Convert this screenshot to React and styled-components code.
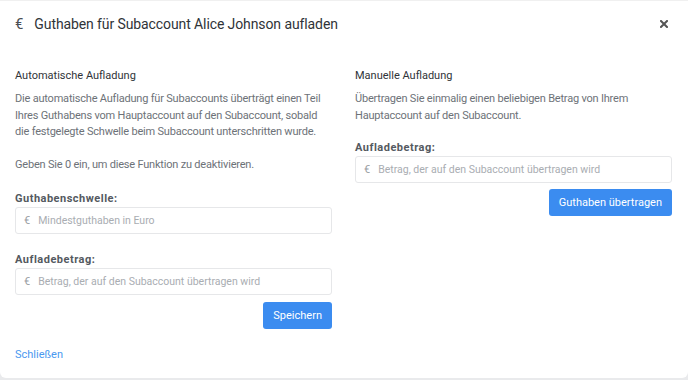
import React from 'react'
import styled, { createGlobalStyle } from 'styled-components'

const GlobalStyle = createGlobalStyle`
  html, body {
    margin: 0;
    padding: 0;
    background: #e9eaec;
  }
  body {
    font-family: Roboto, "Liberation Sans", Arial, sans-serif;
    -webkit-font-smoothing: antialiased;
  }
`

const Modal = styled.div`
  width: 688px;
  height: 378px;
  background: #fff;
  border-radius: 0 0 6px 6px;
  border-top: 1px solid #f0f0f0;
  box-sizing: border-box;
  display: flex;
  flex-direction: column;
`

const Header = styled.div`
  height: 46px;
  padding: 0 16px 0 15px;
  display: flex;
  align-items: center;
  justify-content: space-between;
`

const Title = styled.h2`
  margin: 0;
  font-size: 14px;
  letter-spacing: -0.1px;
  font-weight: 400;
  color: #2f3338;
  display: flex;
  align-items: center;
  gap: 11px;
`

const Euro = styled.span`
  font-size: ${p => p.size || 15}px;
  color: ${p => p.color || '#4a4e54'};
`

const Close = styled.button`
  border: 0;
  background: transparent;
  padding: 0;
  margin-right: 4px;
  cursor: pointer;
  display: flex;
  svg { display: block; }
`

const Body = styled.div`
  flex: 1;
  padding: 20px 16px 0 15px;
  display: grid;
  grid-template-columns: 1fr 1fr;
  column-gap: 23px;
`

const Column = styled.div`
  display: flex;
  flex-direction: column;
`

const SectionTitle = styled.h3`
  margin: 0 0 7px;
  font-size: 11px;
  font-weight: 400;
  color: #2f3338;
  line-height: 17px;
`

const Text = styled.p`
  margin: 0 0 ${p => p.mb || 0}px;
  font-size: 11px;
  letter-spacing: -0.2px;
  line-height: 16.5px;
  color: #6d7278;
`

const Label = styled.label`
  display: block;
  font-size: 11px;
  font-weight: 700;
  letter-spacing: 0.5px;
  color: #545960;
  line-height: 14px;
  margin-bottom: 1px;
`

const Field = styled.div`
  margin-bottom: ${p => p.mb || 0}px;
`

const InputWrap = styled.div`
  height: 27px;
  border: 1px solid #e6e7e9;
  border-radius: 3px;
  box-sizing: border-box;
  display: flex;
  align-items: center;
  padding-left: 8px;
  gap: 8px;
`

const Input = styled.input`
  flex: 1;
  border: 0;
  outline: 0;
  font: inherit;
  font-size: 10.5px;
  color: #333;
  background: transparent;
  padding: 0;
  &::placeholder {
    color: #a9adb2;
  }
`

const Actions = styled.div`
  display: flex;
  justify-content: flex-end;
  margin-top: ${p => p.mt || 7}px;
`

const Button = styled.button`
  height: 27px;
  padding: 0 10px;
  border: 0;
  border-radius: 3px;
  background: #3b8cf0;
  color: #fff;
  font: inherit;
  font-size: 11px;
  cursor: pointer;
`

const Footer = styled.div`
  padding: 0 15px 15px;
  line-height: 16px;
`

const Link = styled.a`
  font-size: 11px;
  color: #4a98ef;
  text-decoration: none;
  cursor: pointer;
`

const MoneyInput = ({ placeholder }) => (
  <InputWrap>
    <Euro size={11} color="#9a9ea4">€</Euro>
    <Input placeholder={placeholder} />
  </InputWrap>
)

const App = () => {
  return (
    <>
      <GlobalStyle />
      <Modal>
        <Header>
          <Title>
            <Euro>€</Euro>
            Guthaben für Subaccount Alice Johnson aufladen
          </Title>
          <Close type="button" aria-label="Schließen">
            <svg width="8" height="8" viewBox="0 0 8 8">
              <path d="M1 1L7 7M7 1L1 7" stroke="#555" strokeWidth="2" strokeLinecap="square" />
            </svg>
          </Close>
        </Header>
        <Body>
          <Column>
            <SectionTitle>Automatische Aufladung</SectionTitle>
            <Text mb={16}>
              Die automatische Aufladung für Subaccounts überträgt einen Teil
              Ihres Guthabens vom Hauptaccount auf den Subaccount, sobald
              die festgelegte Schwelle beim Subaccount unterschritten wurde.
            </Text>
            <Text mb={19}>Geben Sie 0 ein, um diese Funktion zu deaktivieren.</Text>
            <Field mb={19}>
              <Label>Guthabenschwelle:</Label>
              <MoneyInput placeholder="Mindestguthaben in Euro" />
            </Field>
            <Field>
              <Label>Aufladebetrag:</Label>
              <MoneyInput placeholder="Betrag, der auf den Subaccount übertragen wird" />
            </Field>
            <Actions>
              <Button>Speichern</Button>
            </Actions>
          </Column>
          <Column>
            <SectionTitle>Manuelle Aufladung</SectionTitle>
            <Text mb={17}>
              Übertragen Sie einmalig einen beliebigen Betrag von Ihrem
              Hauptaccount auf den Subaccount.
            </Text>
            <Field>
              <Label>Aufladebetrag:</Label>
              <MoneyInput placeholder="Betrag, der auf den Subaccount übertragen wird" />
            </Field>
            <Actions mt={6}>
              <Button>Guthaben übertragen</Button>
            </Actions>
          </Column>
        </Body>
        <Footer>
          <Link>Schließen</Link>
        </Footer>
      </Modal>
    </>
  )
}

export default App
